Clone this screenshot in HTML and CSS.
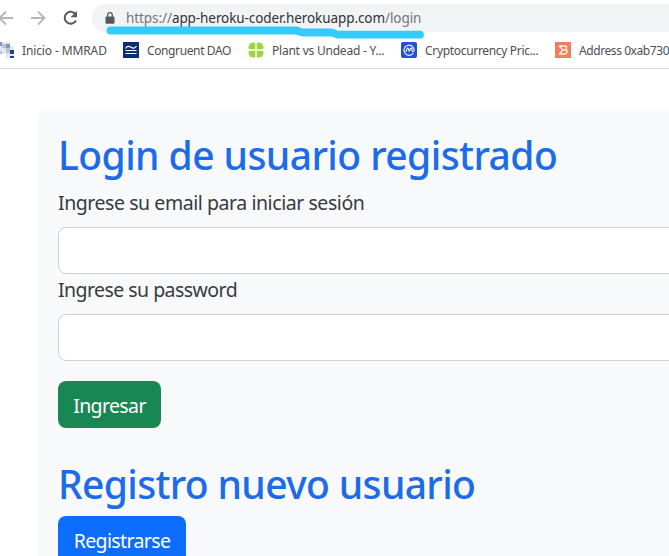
FILE: index.html
```html
<!DOCTYPE html>
<html lang="es">
<head>
<meta charset="utf-8">
<title>Login</title>
<link rel="stylesheet" href="styles.css">
</head>
<body>
<header class="browser">
  <div class="toolbar">
    <svg class="nav" width="86" height="36" viewBox="0 0 86 36" fill="none">
      <path d="M13 18H-1M6 11.500L-.5 18L6 24.500M31 18H44.500M38 11.500L44.500 18L38 24.500" stroke="#b4b6b9" stroke-width="1.800"/>
      <path d="M75.600 14.300A6 6 0 1 0 76 20.500" stroke="#55585c" stroke-width="2"/>
      <path d="M77 11V17.300H70.500Z" fill="#55585c"/>
    </svg>
    <div class="address">
      <svg class="lock" width="10" height="12" viewBox="0 0 10 12"><rect x=".5" y="4.500" width="9" height="7.200" rx="1" fill="#55585c"/><path d="M2.700 5V3a2.300 2.300 0 0 1 4.600 0V5" fill="none" stroke="#55585c" stroke-width="1.300"/></svg>
      <span class="url"><span class="scheme">https://</span><span class="host">app-heroku-coder.herokuapp.com</span><span class="path">/login</span></span>
    </div>
    <svg class="marker" width="330" height="20" viewBox="0 0 330 20"><path d="M10.500 8.500H196C199 8.500 200 10.500 203 10.500H231C235 10.500 235 12.700 239 12.700H320" fill="none" stroke="#34cbfb" stroke-width="7.800" stroke-linecap="round" stroke-linejoin="round"/></svg>
  </div>
  <nav class="bookmarks">
    <a class="bookmark b1"><svg width="16" height="16" viewBox="0 0 16 16"><path fill="#e3e8f0" d="M0 0h12v4h4v12H8v-4H0z"/><path fill="#8195b5" d="M0 0h4v4H0zM8 2h4v4H8z"/><path fill="#b7c3d8" d="M4 2h4v4H4zM8 6h4v5H8zM1 9h3v3H1z"/><path fill="#24457f" d="M12 8h4v4h-4zM12 14h4v2h-4z"/></svg><span>Inicio - MMRAD</span></a>
    <a class="bookmark b2"><svg width="16" height="16" viewBox="0 0 16 16"><path fill="#0b2e70" d="M0 0h16v16H0z"/><path d="M2.500 6.500C4 3.700 6 4 8 5.300s4 1.200 5.500-1.300M2.500 8.500h11M2.500 11.500h11" fill="none" stroke="#fff" stroke-width="1.200"/></svg><span>Congruent DAO</span></a>
    <a class="bookmark b3"><svg width="16" height="16" viewBox="0 0 16 16" fill="#9bd63f"><path id="leaf" d="M7.300 7.300H2.500Q-.3 7 .6 4.300Q.8 3.500 1.700 3.300Q1 1.500 2.700 .9Q3.600 .6 4.300 1.100Q5-.2 6.300 .4Q7.300 1 7.300 3Z"/><use href="#leaf" transform="matrix(-1 0 0 1 16 0)"/><use href="#leaf" transform="matrix(1 0 0 -1 0 16)"/><use href="#leaf" transform="matrix(-1 0 0 -1 16 16)"/></svg><span>Plant vs Undead - Y...</span></a>
    <a class="bookmark b4"><svg width="16" height="16" viewBox="0 0 16 16"><rect width="16" height="16" rx="2" fill="#244fd2"/><path d="M12.300 11A5.100 5.100 0 1 1 13.100 8C13.100 10 11 10 11 8.200V7Q10.200 5.300 9.300 7L8.200 9L7.300 6.500Q6.500 5.500 6 7L4.700 10" fill="none" stroke="#e8efff" stroke-width="1.200"/></svg><span>Cryptocurrency Pric...</span></a>
    <a class="bookmark b5"><svg width="16" height="16" viewBox="0 0 16 16"><path fill="#f17e5d" d="M0 0h16v16H0z"/><path d="M4 4H10.500Q12.500 4.500 11 7.500Q13 9 11.500 11Q11 12 9.500 12H4M4.500 4.500L8 8L4.500 11.500M7 8H11" fill="none" stroke="#fff0e9" stroke-width="1.400"/></svg><span>Address 0xab730</span></a>
  </nav>
</header>
<main class="card">
  <h1 class="title t1"><span>Login de usuario registrado</span></h1>
  <form>
    <label class="label l1" for="email">Ingrese su email para iniciar sesión</label>
    <input class="field" id="email" type="email">
    <label class="label l2" for="password">Ingrese su password</label>
    <input class="field" id="password" type="password">
    <button class="btn green" type="button">Ingresar</button>
  </form>
  <h1 class="title t2"><span>Registro nuevo usuario</span></h1>
  <button class="btn blue" type="button">Registrarse</button>
</main>
</body>
</html>
```
FILE: styles.css
```css
* { box-sizing: border-box; }
body { margin: 0; height: 556px; overflow: hidden; background: #fff; font-family: "Noto Sans", "Open Sans", sans-serif; }
.browser { height: 69px; border-bottom: 1px solid #dadce0; }
.toolbar { position: relative; display: flex; height: 36px; }
.nav { flex: none; margin-right: 6px; }
.address { display: flex; flex: 1; height: 28px; margin-top: 4px; padding-left: 13px; background: #f1f3f4; border-radius: 14px 0 0 14px; align-items: center; }
.lock { flex: none; margin-right: 11px; }
.url { font-size: 13.500px; line-height: 28px; white-space: nowrap; color: #73777b; letter-spacing: -.08px; }
.host { color: #303338; }
.marker { position: absolute; left: 100px; top: 22px; }
.bookmarks { display: flex; height: 28px; align-items: center; white-space: nowrap; font-size: 12px; color: #4b4e52; letter-spacing: -.42px; }
.bookmark { display: flex; flex: none; align-items: center; gap: 8px; }
.bookmark svg { flex: none; }
.b1 { margin-left: -2px; width: 125px; letter-spacing: -.12px; }
.b2 { width: 125px; letter-spacing: -.38px; }
.b3 { width: 153px; letter-spacing: -.22px; }
.b4 { width: 154px; letter-spacing: -.32px; }
.card { height: 470px; margin: 40px 0 0 38px; padding: 20px 0 0 20px; background: #f8f9fa; border-radius: 8px 0 0; overflow: hidden; }
.title { margin: 0; font-size: 39px; font-weight: 500; line-height: 48px; color: #1c6bea; white-space: nowrap; }
.t1 { margin-top: 2px; letter-spacing: -.57px; }
.t2 { margin-top: 32px; letter-spacing: -.64px; }
.label { display: block; height: 30px; font-size: 19.500px; line-height: 30px; color: #363b40; white-space: nowrap; }
.l1 { margin: 9px 0 9px; letter-spacing: -.44px; }
.l2 { margin: 1px 0 9px; letter-spacing: -.55px; }
.field { display: block; width: 640px; height: 47px; border: 1px solid #ced1d8; border-radius: 8px; background: #fff; }
.btn { display: block; height: 47px; padding: 3px 0 0; border: 0; border-radius: 8px; font: 19.500px/42px "Noto Sans", "Open Sans", sans-serif; letter-spacing: -.62px; color: #fff; text-align: center; }
.green { width: 103px; margin-top: 20px; background: #198754; }
.blue { width: 128px; margin-top: 8px; background: #0d6efd; }
```
